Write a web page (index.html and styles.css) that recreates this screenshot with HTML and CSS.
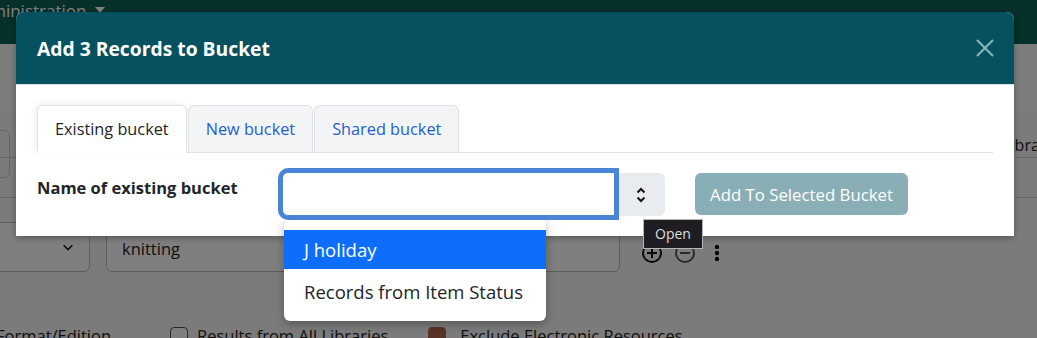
FILE: index.html
```html
<!DOCTYPE html>
<html>
<head>
    <meta charset="UTF-8">
    <title>Add Records to Bucket</title>
    <link rel="stylesheet" href="styles.css">
</head>
<body>
    <div class="page">
        <div class="navbar">
            <span class="nav-item">Administration</span>
            <svg class="caret" width="10" height="6" viewBox="0 0 10 6"><path d="M0 0h10L5 6z" fill="#fff"/></svg>
        </div>
        <div class="toolbar"></div>
        <div class="page-tabs">
            <span class="page-tab"></span>
            <span class="page-tab-right">Libraries</span>
        </div>
        <div class="page-strip"></div>
        <div class="search-row">
            <div class="fake-select">
                <svg width="14" height="14" viewBox="0 0 16 16"><path d="M3 6l5 5 5-5" fill="none" stroke="#222" stroke-width="2"/></svg>
            </div>
            <div class="fake-input">knitting</div>
            <div class="row-icons">
                <svg width="22" height="22" viewBox="0 0 22 22"><circle cx="11" cy="11" r="9" fill="none" stroke="#111" stroke-width="2"/><path d="M11 6v10M6 11h10" stroke="#111" stroke-width="2"/></svg>
                <svg width="22" height="22" viewBox="0 0 22 22"><circle cx="11" cy="11" r="9" fill="none" stroke="#555" stroke-width="2"/><path d="M6 11h10" stroke="#555" stroke-width="2"/></svg>
                <svg width="8" height="22" viewBox="0 0 8 22"><circle cx="4" cy="5" r="2.2" fill="#111"/><circle cx="4" cy="11" r="2.2" fill="#111"/><circle cx="4" cy="17" r="2.2" fill="#111"/></svg>
            </div>
        </div>
        <div class="options-row">
            <span class="opt-text first">Format/Edition</span>
            <span class="checkbox"></span>
            <span class="opt-text">Results from All Libraries</span>
            <span class="checkbox checked"></span>
            <span class="opt-text">Exclude Electronic Resources</span>
        </div>
    </div>

    <div class="backdrop"></div>

    <div class="modal">
        <div class="modal-header">
            <span class="modal-title">Add 3 Records to Bucket</span>
            <svg class="close" width="18" height="18" viewBox="0 0 18 18"><path d="M1 1l16 16M17 1L1 17" stroke="#8fb4bb" stroke-width="2"/></svg>
        </div>
        <div class="modal-body">
            <div class="tabs">
                <span class="tab active">Existing bucket</span>
                <span class="tab">New bucket</span>
                <span class="tab">Shared bucket</span>
            </div>
            <div class="form-row">
                <label class="form-label">Name of existing bucket</label>
                <div class="combo">
                    <input class="combo-input" type="text">
                    <span class="combo-toggle">
                        <svg width="10" height="16" viewBox="0 0 10 16"><path d="M1.5 5.5L5 2l3.5 3.5M1.5 10.5L5 14l3.5-3.5" fill="none" stroke="#111" stroke-width="2"/></svg>
                    </span>
                </div>
                <button class="add-btn">Add To Selected Bucket</button>
            </div>
        </div>
    </div>

    <ul class="dropdown">
        <li class="selected">J holiday</li>
        <li>Records from Item Status</li>
    </ul>

    <div class="tooltip">Open</div>
</body>
</html>
```

FILE: styles.css
```css
body {
    margin: 0;
    font-family: "Open Sans", "Noto Sans", sans-serif;
    overflow: hidden;
    height: 338px;
    position: relative;
}

/* page behind the dialog */
.page {
    background-color: #f6f6f6;
    height: 338px;
    color: #222;
}

.navbar {
    height: 44px;
    background-color: #0c6054;
    color: #fff;
    font-size: 17px;
    display: flex;
    align-items: flex-start;
}

.nav-item {
    margin-left: -31px;
    line-height: 22px;
}

.caret {
    margin-left: 9px;
    margin-top: 7px;
}

.toolbar {
    height: 66px;
    background-color: #fbfbfb;
}

.page-tabs {
    height: 47px;
    display: flex;
    justify-content: space-between;
    align-items: flex-start;
    border-bottom: 1px solid #ccc;
}

.page-tab {
    width: 20px;
    height: 46px;
    margin-left: -12px;
    margin-top: 20px;
    border: 1px solid #ccc;
    border-radius: 6px;
}

.page-tab-right {
    margin-right: -30px;
    margin-top: 24px;
    font-size: 16px;
}

.page-strip {
    height: 39px;
    border-bottom: 1px solid #ccc;
}

.search-row {
    display: flex;
    align-items: center;
    margin-top: 24px;
    height: 50px;
}

.fake-select {
    width: 140px;
    height: 50px;
    margin-left: -50px;
    border: 1px solid #bbb;
    border-radius: 6px;
    background: #fff;
    display: flex;
    justify-content: flex-end;
    align-items: center;
    padding-right: 14px;
    box-sizing: border-box;
}

.fake-input {
    width: 514px;
    height: 50px;
    margin-left: 16px;
    border: 1px solid #bbb;
    border-radius: 6px;
    background: #fff;
    box-sizing: border-box;
    padding: 0 15px;
    line-height: 52px;
    font-size: 16.5px;
}

.row-icons {
    display: flex;
    align-items: center;
    gap: 11px;
    margin-left: 21px;
    margin-top: 12px;
}

.row-icons svg:last-child {
    margin-left: 6px;
}

.options-row {
    display: flex;
    align-items: center;
    margin-top: 52px;
    font-size: 16.5px;
}

.opt-text.first {
    margin-left: -4px;
    width: 174px;
}

.opt-text {
    margin-left: 9px;
}

.checkbox {
    width: 16px;
    height: 16px;
    border: 1px solid #555;
    border-radius: 4px;
    background: #fff;
}

.checkbox.checked {
    margin-left: 40px;
    background: #b0674a;
    border-color: #b0674a;
}

.checkbox.checked + .opt-text {
    margin-left: 14px;
}

.backdrop {
    position: absolute;
    inset: 0;
    background-color: rgba(0, 0, 0, 0.5);
}

/* dialog */
.modal {
    position: absolute;
    left: 16px;
    top: 12px;
    width: 998px;
    background-color: #fff;
    border-radius: 8px 8px 0 0;
    box-shadow: 0 2px 6px rgba(0, 0, 0, 0.3);
    overflow: hidden;
}

.modal-header {
    height: 72px;
    background-color: #055160;
    border-bottom: 1px solid #dee2e6;
    display: flex;
    justify-content: space-between;
    align-items: center;
    padding: 0 20px 0 21px;
}

.modal-title {
    color: #fff;
    font-size: 19.3px;
    font-weight: 700;
}

.modal-body {
    padding: 20px 21px 20px 21px;
}

.tabs {
    display: flex;
    gap: 1px;
    border-bottom: 1px solid #dee2e6;
}

.tab {
    height: 46px;
    line-height: 46px;
    padding: 0 17px 0 17px;
    font-size: 16.3px;
    color: #1d5fcc;
    background-color: #f3f4f6;
    border: 1px solid #dee2e6;
    border-bottom: none;
    border-radius: 6px 6px 0 0;
}

.tab.active {
    color: #212529;
    background-color: #fff;
    box-shadow: -2px -2px 6px rgba(0, 0, 0, 0.06);
    margin-bottom: -1px;
    height: 47px;
}

.form-row {
    display: flex;
    align-items: flex-start;
    margin-top: 19px;
}

.form-label {
    width: 245px;
    font-weight: 700;
    font-size: 16.5px;
    color: #212529;
    padding-top: 4px;
}

.combo {
    display: flex;
}

.combo-input {
    position: relative;
    z-index: 1;
    width: 333px;
    height: 44px;
    box-sizing: border-box;
    border: 1px solid #4a84d6;
    border-radius: 6px 0 0 6px;
    box-shadow: 0 0 0 4px #4a84d6;
    outline: none;
    margin: 0;
}

.combo-toggle {
    width: 48px;
    height: 43px;
    margin-top: 1px;
    margin-left: 2px;
    background-color: #e9ecef;
    border-radius: 0 6px 6px 0;
    display: flex;
    justify-content: center;
    align-items: center;
}

.add-btn {
    margin-left: 30px;
    margin-top: 1px;
    width: 213px;
    height: 42px;
    border: none;
    border-radius: 6px;
    background-color: #8aaeb5;
    color: #fff;
    font-family: inherit;
    font-size: 16.8px;
}

/* open list of the combo */
.dropdown {
    position: absolute;
    left: 284px;
    top: 219px;
    width: 262px;
    margin: 0;
    padding: 11px 0 9px;
    list-style: none;
    background-color: #fff;
    border-radius: 6px;
    box-shadow: 0 3px 10px rgba(0, 0, 0, 0.3);
}

.dropdown li {
    height: 40px;
    line-height: 40px;
    padding: 0 20px;
    font-size: 18.5px;
    color: #212529;
    white-space: nowrap;
}

.dropdown li.selected {
    background-color: #0d6efd;
    color: #fff;
    height: 39px;
    margin-bottom: 3px;
}

.tooltip {
    position: absolute;
    left: 643px;
    top: 219px;
    width: 58px;
    height: 28px;
    line-height: 28px;
    text-align: center;
    background-color: #1e1e22;
    border: 1px solid #b5b5b5;
    color: #ddd;
    font-size: 14px;
}
```
